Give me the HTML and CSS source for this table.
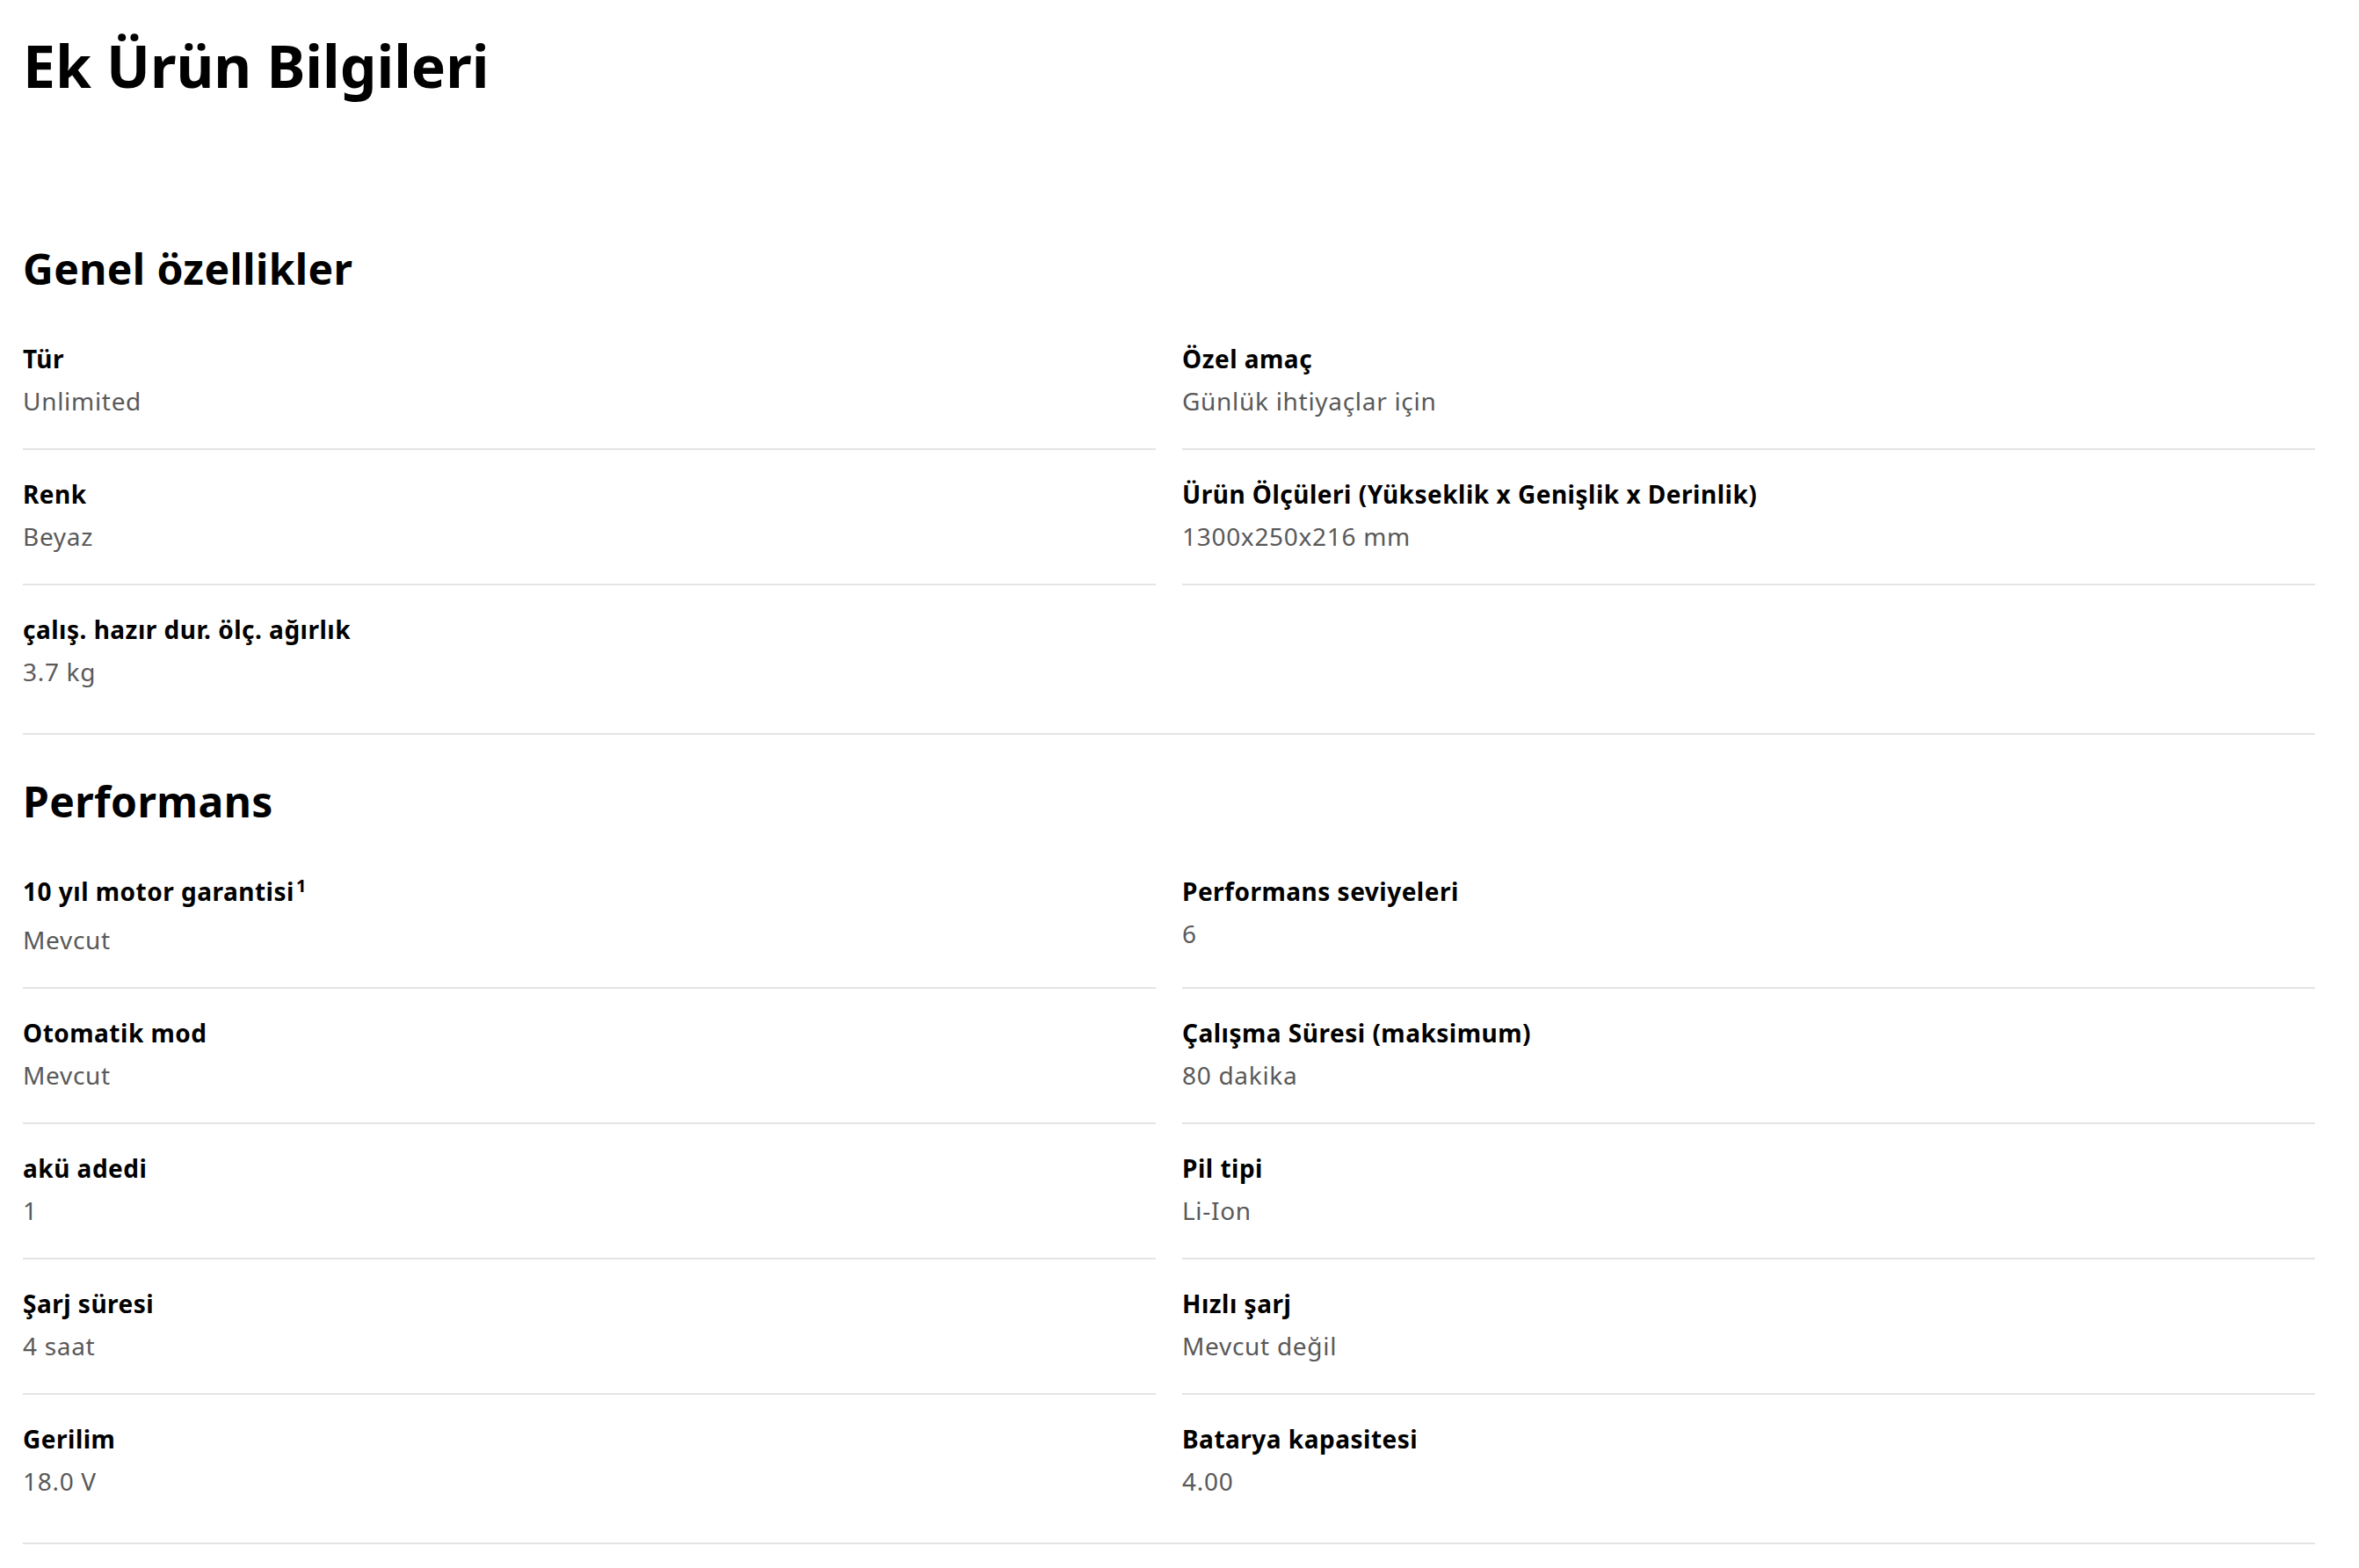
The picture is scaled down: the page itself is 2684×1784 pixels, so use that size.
FILE: index.html
```html
<!DOCTYPE html>
<html lang="tr">
<head>
<meta charset="utf-8">
<title>Ek Ürün Bilgileri</title>
<link rel="stylesheet" href="styles.css">
</head>
<body>
<main class="page">
  <h1 class="page__title">Ek Ürün Bilgileri</h1>

  <section class="specs">
    <h2 class="specs__heading">Genel özellikler</h2>
    <div class="specs__grid">
      <div class="spec"><div class="spec__label">Tür</div><div class="spec__value">Unlimited</div></div>
      <div class="spec"><div class="spec__label">Özel amaç</div><div class="spec__value">Günlük ihtiyaçlar için</div></div>
      <div class="spec"><div class="spec__label">Renk</div><div class="spec__value">Beyaz</div></div>
      <div class="spec"><div class="spec__label">Ürün Ölçüleri (Yükseklik x Genişlik x Derinlik)</div><div class="spec__value">1300x250x216 mm</div></div>
      <div class="spec"><div class="spec__label">çalış. hazır dur. ölç. ağırlık</div><div class="spec__value">3.7 kg</div></div>
    </div>
  </section>

  <section class="specs">
    <h2 class="specs__heading">Performans</h2>
    <div class="specs__grid">
      <div class="spec"><div class="spec__label">10 yıl motor garantisi<sup class="spec__sup">1</sup></div><div class="spec__value">Mevcut</div></div>
      <div class="spec"><div class="spec__label">Performans seviyeleri</div><div class="spec__value">6</div></div>
      <div class="spec"><div class="spec__label">Otomatik mod</div><div class="spec__value">Mevcut</div></div>
      <div class="spec"><div class="spec__label">Çalışma Süresi (maksimum)</div><div class="spec__value">80 dakika</div></div>
      <div class="spec"><div class="spec__label">akü adedi</div><div class="spec__value">1</div></div>
      <div class="spec"><div class="spec__label">Pil tipi</div><div class="spec__value">Li-Ion</div></div>
      <div class="spec"><div class="spec__label">Şarj süresi</div><div class="spec__value">4 saat</div></div>
      <div class="spec"><div class="spec__label">Hızlı şarj</div><div class="spec__value">Mevcut değil</div></div>
      <div class="spec"><div class="spec__label">Gerilim</div><div class="spec__value">18.0 V</div></div>
      <div class="spec"><div class="spec__label">Batarya kapasitesi</div><div class="spec__value">4.00</div></div>
    </div>
  </section>
</main>
</body>
</html>
```

FILE: styles.css
```css
* { box-sizing: border-box; }

html, body {
  margin: 0;
  padding: 0;
  background: #ffffff;
}

body {
  font-family: "Noto Sans", "Open Sans", "DejaVu Sans", sans-serif;
  color: #000000;
}

.page {
  padding: 34px 50px 40px 26px;
}

.page__title {
  margin: 0 0 116px 0;
  font-size: 66px;
  line-height: 80px;
  font-weight: 700;
}

.specs {
  padding-top: 46px;
  padding-bottom: 16px;
  border-bottom: 2px solid #e4e4e4;
}

.specs__heading {
  margin: 0 0 22px 0;
  font-size: 48px;
  line-height: 60px;
  font-weight: 700;
  letter-spacing: 0.4px;
}

.specs__grid {
  display: grid;
  grid-template-columns: 1fr 1fr;
  column-gap: 30px;
}

.spec {
  padding: 30px 0 34px 0;
  border-bottom: 2px solid #e4e4e4;
}

.spec:last-child,
.spec:nth-last-child(2):nth-child(odd) {
  border-bottom: none;
  padding-bottom: 34px;
}

.spec__label {
  font-size: 28px;
  line-height: 40px;
  font-weight: 700;
  letter-spacing: 0.5px;
  color: #000000;
}

.spec__sup {
  display: inline-block;
  vertical-align: top;
  font-size: 20px;
  line-height: 20px;
  font-weight: 700;
  margin-top: 4px;
  margin-left: 2px;
  padding-bottom: 23px;
}

.spec__value {
  margin-top: 8px;
  font-size: 28px;
  line-height: 40px;
  font-weight: 400;
  letter-spacing: 0.7px;
  color: #595959;
}
```
